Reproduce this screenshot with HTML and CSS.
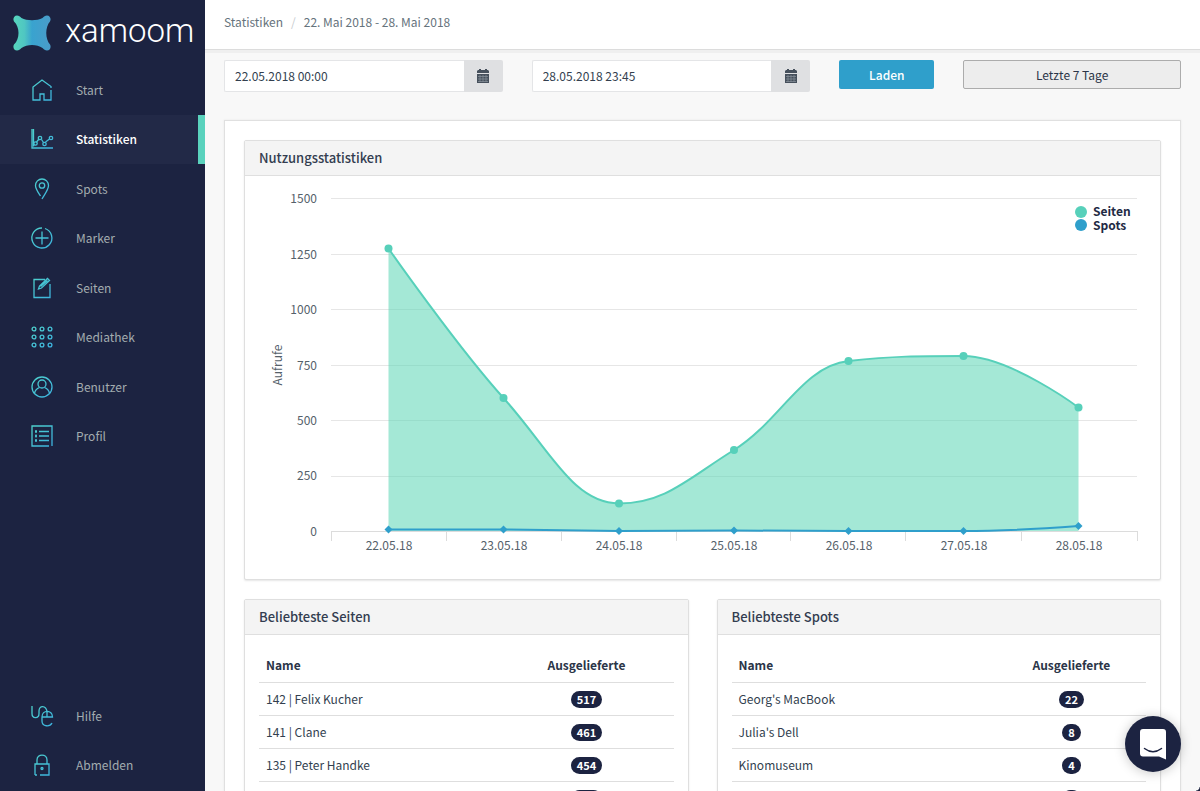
FILE: index.html
```html
<!DOCTYPE html>
<html lang="de">
<head>
<meta charset="utf-8">
<meta name="viewport" content="width=device-width, initial-scale=1">
<title>xamoom – Statistiken</title>
<link rel="stylesheet" href="styles.css">
</head>
<body>
<svg class="defs" aria-hidden="true">
  <defs>
    <linearGradient id="line" gradientUnits="userSpaceOnUse" x1="0" y1="0" x2="22" y2="22">
      <stop offset="0" stop-color="#4fd3cb"/><stop offset="1" stop-color="#3bb0e0"/>
    </linearGradient>
    <linearGradient id="brand" x1="0" y1="0" x2="1" y2="0">
      <stop offset="0" stop-color="#57d6bd"/><stop offset=".3" stop-color="#4fc6c2"/><stop offset=".5" stop-color="#39a3cf"/><stop offset="1" stop-color="#4a9cc9"/>
    </linearGradient>
  </defs>
</svg>
<div class="app">
  <aside class="sidebar">
    <a class="brand" href="#">
      <svg class="brand-mark" viewBox="0 0 38 36" aria-hidden="true"><path fill="url(#brand)" d="M4 0.500C6 0.500 7 1.500 8.500 3C14 6 24 6 29.500 3C31 1.500 32 0.500 34 0.500C37 0.500 38.500 4 37 6.500C32 12 32 24 37 29.500C38.500 32 37 35.500 34 35.500C32 35.500 31 34.500 29.500 33C24 29 14 29 8.500 33C7 34.500 6 35.500 4 35.500C1 35.500 -0.500 32 1 29.500C7 24 7 12 1 6.500C-0.500 4 1 0.500 4 0.500Z"/></svg>
      <span class="brand-name">xamoom</span>
    </a>
    <nav class="nav">
      <a class="nav-item" href="#"><svg class="icon" viewBox="0 0 22 22"><path d="M20 9V7.500L11 1L2 8V21H9V15H13V21H20V11"/></svg>Start</a>
      <a class="nav-item active" href="#" aria-current="page"><svg class="icon" viewBox="0 0 22 22"><path d="M1 1V20H22M2.500 1V18.500"/><path d="M5.500 14L8 11M10.500 11.500L12.500 14.500M14.500 14L18.500 11"/><circle cx="4.500" cy="15.500" r="1.700"/><circle cx="9" cy="10" r="1.700"/><circle cx="13.500" cy="16" r="1.700"/><circle cx="20" cy="10" r="1.700"/></svg>Statistiken</a>
      <a class="nav-item" href="#"><svg class="icon" viewBox="0 0 22 22"><path d="M9.500 18C7 14 4.500 11 4.500 7.500A6.500 6.500 0 0 1 17.500 7.500C17.500 12 13 17 11 21"/><circle cx="11" cy="7.500" r="2.700"/></svg>Spots</a>
      <a class="nav-item" href="#"><svg class="icon" viewBox="0 0 22 22"><path d="M14 1.500A10 10 0 1 1 11 1M11 4.500V17.500M4.500 11H17.500"/></svg>Marker</a>
      <a class="nav-item" href="#"><svg class="icon" viewBox="0 0 22 22"><path d="M14 2.500H3V20.500H19V7M7.500 12L8.500 9L16.500 1.500L18.500 3.500L10.500 11Z M9.500 9.500L16.500 3.500"/></svg>Seiten</a>
      <a class="nav-item" href="#"><svg class="icon" viewBox="0 0 22 22"><circle cx="3" cy="3" r="1.900"/><circle cx="11" cy="3" r="1.900"/><circle cx="19" cy="3" r="1.900"/><circle cx="3" cy="11" r="1.900"/><circle cx="11" cy="11" r="1.900"/><circle cx="19" cy="11" r="1.900"/><circle cx="3" cy="19" r="1.900"/><circle cx="11" cy="19" r="1.900"/><circle cx="19" cy="19" r="1.900"/></svg>Mediathek</a>
      <a class="nav-item" href="#"><svg class="icon" viewBox="0 0 22 22"><circle cx="11" cy="11" r="10"/><circle cx="11" cy="8" r="4"/><path d="M3.500 17.500C4 14 6 12.500 8.500 11.500M13.500 11.500C16 12.500 18 14 18.500 17.500"/></svg>Benutzer</a>
      <a class="nav-item" href="#"><svg class="icon" viewBox="0 0 22 22"><path d="M18 21H1V1H21V21M4 6.500H6M8 6.500H18M4 11H6M8 11H18M4 15.500H6M8 15.500H18M5 5V8M5 9.500V12.500M5 14V17"/></svg>Profil</a>
    </nav>
    <nav class="nav nav-foot">
      <a class="nav-item" href="#"><svg class="icon" viewBox="0 0 22 22"><path d="M1 1V8.500C1 14 8 14 8 8.500V6C8 0 15 0 16 6.500"/><path d="M11 12H21.500C21.500 4.500 11 4.500 11 12V16C11 22 19 22 21 18M16 7V12"/></svg>Hilfe</a>
      <a class="nav-item" href="#"><svg class="icon" viewBox="0 0 22 22"><path d="M4 21V10H18V21H9M4 21H6M6 10V6C6 -0.500 16 -0.500 16 6V10"/><circle cx="11" cy="14.500" r="1"/></svg>Abmelden</a>
    </nav>
  </aside>

  <main class="main">
    <header class="topbar">
      <a class="crumb" href="#">Statistiken</a><span class="slash">/</span><span class="crumb">22. Mai 2018 - 28. Mai 2018</span>
    </header>
    <div class="content">
      <form class="filters">
        <div class="date"><input class="date-input" type="text" aria-label="Von" value="22.05.2018 00:00"><button class="date-btn" type="button" aria-label="Kalender öffnen"><svg class="cal" viewBox="0 0 14 14"><path d="M2 1H3V0H5V1H9V0H11V1H12L13 2V4H1V2Z"/><path d="M1 5H13V14H1Z"/><path class="cal-grid" d="M2 7.500H12M2 10H12M2 12.500H12M4 6V13M7 6V13M10 6V13"/></svg></button></div>
        <div class="date"><input class="date-input" type="text" aria-label="Bis" value="28.05.2018 23:45"><button class="date-btn" type="button" aria-label="Kalender öffnen"><svg class="cal" viewBox="0 0 14 14"><path d="M2 1H3V0H5V1H9V0H11V1H12L13 2V4H1V2Z"/><path d="M1 5H13V14H1Z"/><path class="cal-grid" d="M2 7.500H12M2 10H12M2 12.500H12M4 6V13M7 6V13M10 6V13"/></svg></button></div>
        <button class="btn btn-primary" type="button">Laden</button>
        <button class="btn btn-range" type="button">Letzte 7 Tage</button>
      </form>

      <div class="card">
        <section class="panel">
          <h2 class="panel-title">Nutzungsstatistiken</h2>
          <svg class="chart" viewBox="0 0 915 403" role="img" aria-label="Aufrufe pro Tag">
            <path class="grid" d="M86 22.500H892M86 78.500H892M86 133.500H892M86 189.500H892M86 244.500H892M86 300.500H892"/>
            <path class="area" d="M143.500 72.500C143.500 72.500 212.500 171 258.500 222C304.500 273 328 327.500 374 327.500C420 327.500 443 302.500 489 274C535 245.500 557.500 190 603.500 185C649.500 180 672.500 180 718.500 180C764.500 180 833.500 231.500 833.500 231.500V355H143.500Z"/>
            <path class="axis" d="M86 355.500H892M86.500 355V365M201.500 355V365M316.500 355V365M431.500 355V365M545.500 355V365M660.500 355V365M776.500 355V365M892.500 355V365"/>
            <path class="pages" d="M143.500 72.500C143.500 72.500 212.500 171 258.500 222C304.500 273 328 327.500 374 327.500C420 327.500 443 302.500 489 274C535 245.500 557.500 190 603.500 185C649.500 180 672.500 180 718.500 180C764.500 180 833.500 231.500 833.500 231.500"/>
            <g class="dot"><circle cx="143.500" cy="72.500" r="4"/><circle cx="258.500" cy="222" r="4"/><circle cx="374" cy="327.500" r="4"/><circle cx="489" cy="274" r="4"/><circle cx="603.500" cy="185" r="4"/><circle cx="718.500" cy="180" r="4"/><circle cx="833.500" cy="231.500" r="4"/></g>
            <path class="spots" d="M143.500 353.500L258.500 353.500L374 355L489 354.500L603.500 355H718.500C764.500 355 833.500 350 833.500 350"/>
            <path class="diamond" d="M143.500 349.500l4 4l-4 4l-4-4zM258.500 349.500l4 4l-4 4l-4-4zM374 351l4 4l-4 4l-4-4zM489 350.500l4 4l-4 4l-4-4zM603.500 351l4 4l-4 4l-4-4zM718.500 351l4 4l-4 4l-4-4zM833.500 346l4 4l-4 4l-4-4z"/>
            <g class="label end"><text x="72" y="27">1500</text><text x="72" y="83">1250</text><text x="72" y="138">1000</text><text x="72" y="194">750</text><text x="72" y="249">500</text><text x="72" y="304">250</text><text x="72" y="360">0</text></g>
            <g class="label mid"><text x="144" y="374">22.05.18</text><text x="259" y="374">23.05.18</text><text x="374" y="374">24.05.18</text><text x="489" y="374">25.05.18</text><text x="604" y="374">26.05.18</text><text x="719" y="374">27.05.18</text><text x="834" y="374">28.05.18</text><text transform="translate(37 189) rotate(-90)">Aufrufe</text></g>
            <circle class="dot" cx="836" cy="36" r="6"/><circle class="diamond" cx="836" cy="49" r="6"/>
            <g class="legend"><text x="848" y="40">Seiten</text><text x="848" y="54">Spots</text></g>
          </svg>
        </section>

        <div class="pair">
          <section class="panel">
            <h2 class="panel-title">Beliebteste Seiten</h2>
            <div class="panel-body">
              <table class="table pages-table">
                <thead><tr><th>Name</th><th class="count">Ausgelieferte</th></tr></thead>
                <tbody>
                  <tr><td>142 | Felix Kucher</td><td class="count"><span class="badge">517</span></td></tr>
                  <tr><td>141 | Clane</td><td class="count"><span class="badge">461</span></td></tr>
                  <tr><td>135 | Peter Handke</td><td class="count"><span class="badge">454</span></td></tr>
                  <tr><td></td><td class="count"><span class="badge">430</span></td></tr>
                </tbody>
              </table>
            </div>
          </section>
          <section class="panel">
            <h2 class="panel-title">Beliebteste Spots</h2>
            <div class="panel-body">
              <table class="table spots-table">
                <thead><tr><th>Name</th><th class="count">Ausgelieferte</th></tr></thead>
                <tbody>
                  <tr><td>Georg's MacBook</td><td class="count"><span class="badge">22</span></td></tr>
                  <tr><td>Julia's Dell</td><td class="count"><span class="badge">8</span></td></tr>
                  <tr><td>Kinomuseum</td><td class="count"><span class="badge">4</span></td></tr>
                  <tr><td></td><td class="count"><span class="badge">3</span></td></tr>
                </tbody>
              </table>
            </div>
          </section>
        </div>
      </div>
    </div>
  </main>
</div>
<button class="chat" type="button" aria-label="Chat öffnen"><svg class="chat-icon" viewBox="0 0 28 32"><path fill="#fff" d="M4 1H24Q27 1 27 4V31.500L20 28.500H4Q1 28.500 1 25.500V4Q1 1 4 1Z"/><path fill="none" stroke="#1c2341" stroke-width="1.500" stroke-linecap="round" d="M5.500 20.500Q14 27 22.500 20.500"/></svg></button>
<span class="corner" aria-hidden="true"></span>
</body>
</html>
```
FILE: styles.css
```css
* { box-sizing: border-box; }
body {
  margin: 0;
  font-family: "Noto Sans CJK SC", "Open Sans", sans-serif;
  font-size: 12px;
  line-height: 18px;
  color: #333f4f;
  background: #f8f8f8;
}
a { color: inherit; text-decoration: none; }
button, input { font: inherit; color: inherit; }
.defs { position: absolute; width: 0; height: 0; }

.app { display: grid; grid-template-columns: 205px 1fr; height: 100vh; }

/* Sidebar */
.sidebar { display: flex; flex-direction: column; background: #1c2341; padding-bottom: 2px; }
.brand { display: flex; align-items: center; gap: 14px; height: 65px; padding: 0 13px; color: #fff; }
.brand-mark { width: 38px; height: 36px; flex: none; }
.brand-name { font-family: Roboto, sans-serif; font-weight: 300; font-size: 33px; line-height: 40px; padding-bottom: 3px; }
.nav { display: grid; grid-auto-rows: 1fr; min-height: 396px; }
.nav-foot { min-height: 98px; margin-top: auto; }
.nav-item { display: flex; align-items: center; gap: 23px; padding-left: 31px; color: #a3acaf; }
.nav-item.active { background: #222947; border-right: 7px solid #5ad2bd; color: #fff; font-weight: 500; }
.icon { width: 22px; height: 22px; flex: none; fill: none; stroke: url(#line); stroke-width: 1.3; overflow: visible; }

/* Main column */
.main { min-width: 0; overflow: auto; scrollbar-width: none; }
.topbar {
  display: flex; align-items: center; gap: 8px;
  height: 50px; padding: 0 19px 5px;
  background: #fff; border-bottom: 1px solid #dcdcdc;
  box-shadow: 0 3px 0 #efefef;
  color: #66737c;
}
.slash { color: #c8cccf; }
.content { padding: 10px 19px 20px; }
.filters { display: grid; grid-template-columns: 279fr 279fr 95fr 218fr; gap: 29px; align-items: start; }
.date { display: flex; height: 32px; }
.date-input { flex: 1; min-width: 0; padding: 0 10px; border: 1px solid #e4e5e7; border-right: 0; border-radius: 2px 0 0 2px; background: #fff; }
.date-btn { display: grid; place-items: center; width: 39px; padding: 0; border: 0; border-radius: 0 2px 2px 0; background: #dfe0e2; }
.cal { width: 14px; height: 14px; fill: #46505c; }
.cal-grid { fill: none; stroke: #8b949c; stroke-width: 0.7; }
.btn { height: 29px; padding: 0; border: 0; border-radius: 2px; }
.btn-primary { background: #2f9fcb; color: #fff; font-weight: 500; }
.btn-range { border: 1px solid #acacac; background: #ededed; color: #2b3548; }

.card { margin-top: 28px; padding: 19px; background: #fff; border: 1px solid #e0e0e0; box-shadow: 0 0 2px #e8e8e8; }
.panel { border: 1px solid #dfdfdf; border-radius: 2px; background: #fff; box-shadow: 0 1px 2px #e6e6e6; }
.panel-title { margin: 0; padding: 8px 14px; font-size: 13px; line-height: 18px; font-weight: 500; color: #333d50; background: #f4f4f4; border-bottom: 1px solid #dfdfdf; }
.pair { display: grid; grid-template-columns: 1fr 1fr; gap: 28px; margin-top: 19px; }
.panel-body { padding: 14px; }

/* Chart */
.chart { display: block; width: 100%; height: auto; font-size: 12px; }
.grid { fill: none; stroke: #e6e6e6; }
.axis { fill: none; stroke: #dcdcdc; }
.area { fill: #56d5b4; fill-opacity: 0.54; }
.pages { fill: none; stroke: #57d0ba; stroke-width: 2; }
.spots { fill: none; stroke: #2f9fcb; stroke-width: 2; }
.dot { fill: #57d0ba; }
.diamond { fill: #2f9fcb; }
.label { fill: #55616a; }
.end { text-anchor: end; }
.mid { text-anchor: middle; }
.legend { font-weight: 700; fill: #1f2a44; }

/* Tables */
.table { width: 100%; table-layout: fixed; border-collapse: collapse; }
.table th, .table td { height: 33px; padding: 0 7px; text-align: left; border-bottom: 1px solid #dedede; }
.table th { font-weight: 700; color: #2b3548; }
.table .count { text-align: center; }
.pages-table .count { width: 42%; }
.spots-table .count { width: 36%; }
.badge { display: inline-block; padding: 0 6px; border-radius: 9px; background: #1c2341; color: #fff; font-size: 11px; line-height: 17px; font-weight: 700; vertical-align: middle; }

/* Chat launcher */
.chat { position: fixed; right: 19px; bottom: 19px; display: grid; place-items: center; width: 56px; height: 56px; padding: 0; border: 0; border-radius: 50%; background: #1c2341; box-shadow: 0 1px 12px rgba(0, 0, 0, 0.22); }
.chat-icon { width: 28px; height: 32px; }
.corner { position: fixed; right: 0; bottom: 0; width: 4px; height: 4px; background: radial-gradient(circle at 0 0, transparent 3px, #1c2341 4px); }
```
